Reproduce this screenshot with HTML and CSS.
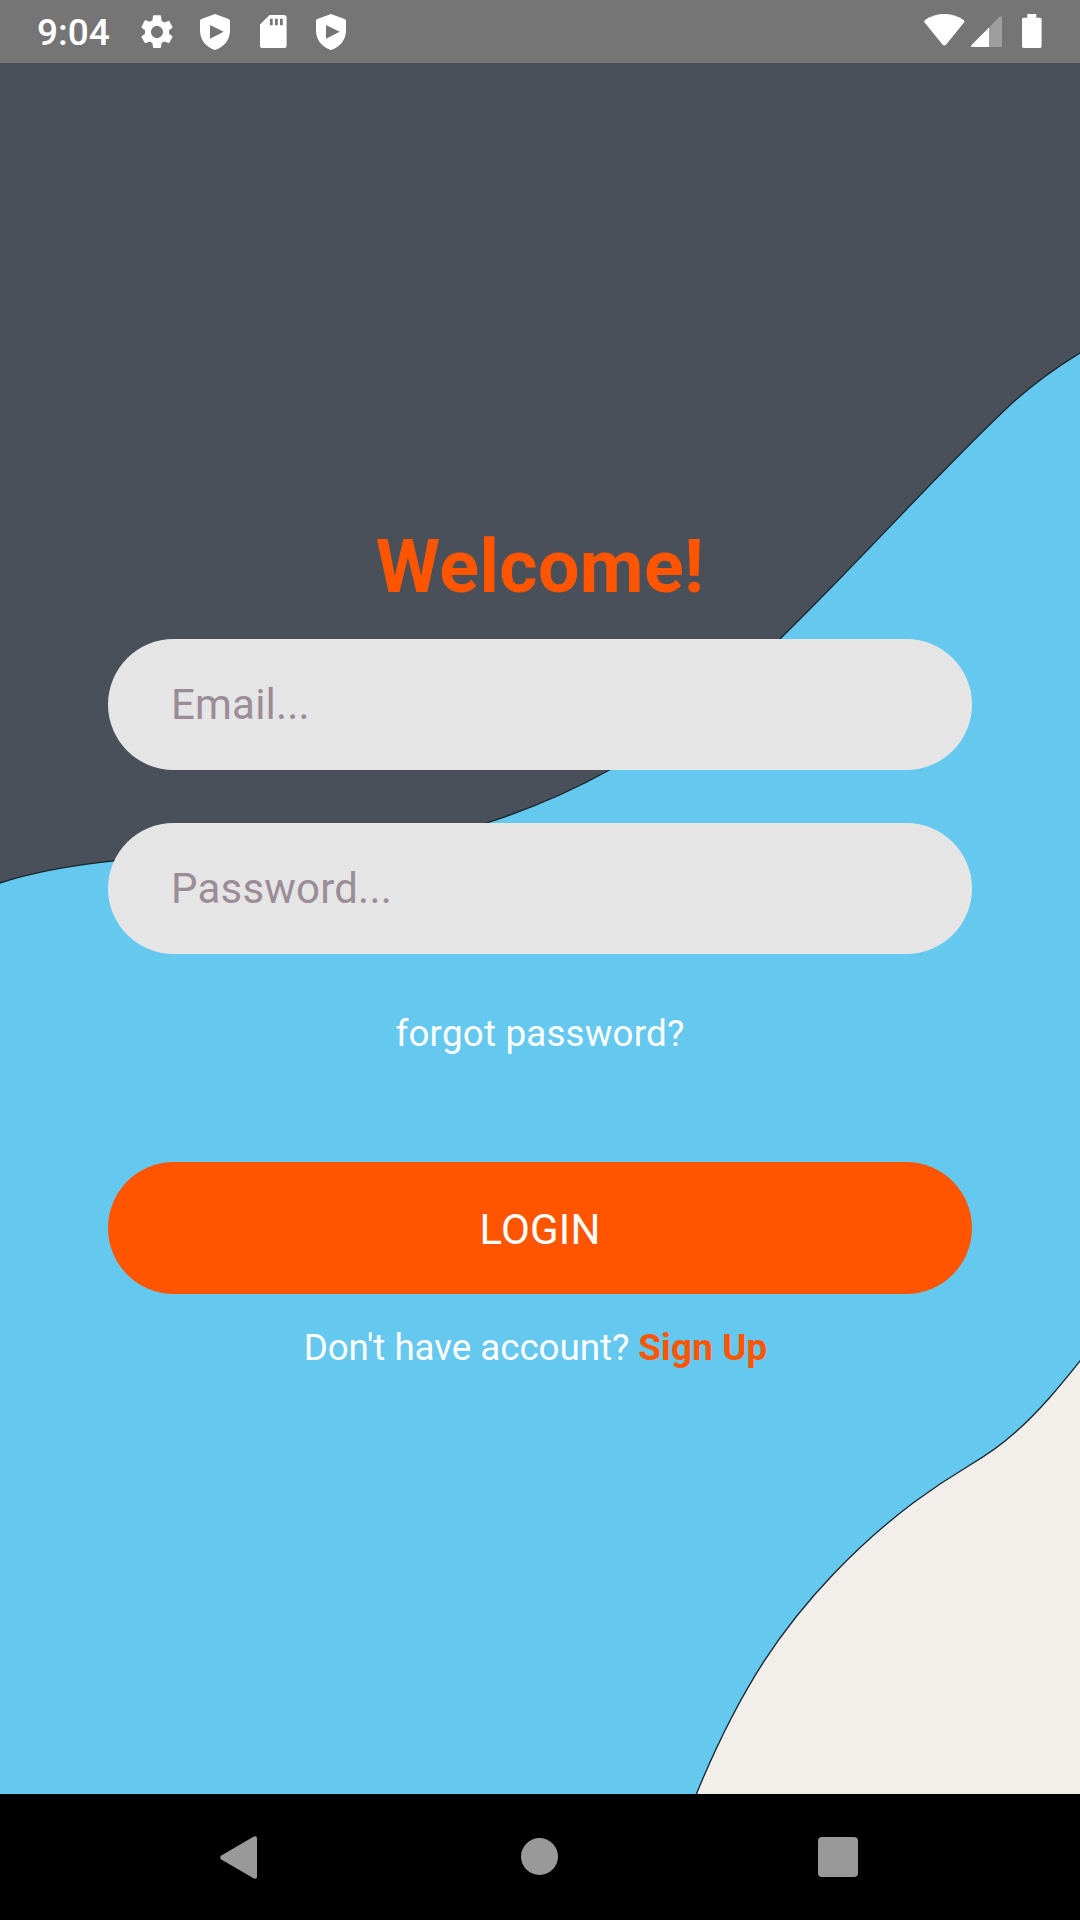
FILE: index.html
```html
<!DOCTYPE html>
<html lang="en">
<head>
<meta charset="utf-8">
<title>Login</title>
<link rel="stylesheet" href="styles.css">
</head>
<body>
<div class="screen">
  <header class="status-bar">
    <span class="clock">9:04</span>
    <svg class="gear" viewBox="0 0 24 24"><path d="M19.14 12.94c.04-.3.06-.61.06-.94 0-.32-.02-.64-.07-.94l2.03-1.58c.18-.14.23-.41.12-.61l-1.92-3.32c-.12-.22-.37-.29-.59-.22l-2.39.96c-.5-.38-1.03-.7-1.62-.94L14.4 2.4c-.04-.24-.24-.4-.48-.4h-3.84c-.24 0-.43.17-.47.41l-.36 2.54c-.59.24-1.13.57-1.62.94l-2.39-.96c-.22-.08-.47 0-.59.22L2.74 8.87c-.12.21-.08.47.12.61l2.03 1.58c-.05.3-.09.63-.09.94s.02.64.07.94l-2.03 1.58c-.18.14-.23.41-.12.61l1.92 3.32c.12.22.37.29.59.22l2.39-.96c.5.38 1.03.7 1.62.94l.36 2.54c.05.24.24.41.48.41h3.84c.24 0 .44-.17.47-.41l.36-2.54c.59-.24 1.13-.56 1.62-.94l2.39.96c.22.08.47 0 .59-.22l1.92-3.32c.12-.22.07-.47-.12-.61l-2.01-1.58zM12 15.6c-1.98 0-3.6-1.62-3.6-3.6s1.62-3.6 3.6-3.6 3.6 1.62 3.6 3.6-1.62 3.6-3.6 3.6z"/></svg>
    <svg class="shield" viewBox="0 0 30 36"><path fill-rule="evenodd" d="M15 0 28.6 5Q30 5.6 30 7V16.500C30 25.500 24 33.400 15 36 6 33.400 0 25.500 0 16.500V7Q0 5.600 1.400 5ZM10 11V24.700L23.700 17.800Z"/></svg>
    <svg class="sd-card" viewBox="0 0 27 33"><path fill-rule="evenodd" d="M9.500 0H24Q26.600 0 26.600 2.600V30.400Q26.600 33 24 33H2.600Q0 33 0 30.400V9.500ZM9.900 3.700V10.300H12.700V3.700ZM15 3.700V10.300H17.800V3.700ZM20 3.700V10.300H22.800V3.700Z"/></svg>
    <svg class="shield" viewBox="0 0 30 36"><path fill-rule="evenodd" d="M15 0 28.6 5Q30 5.6 30 7V16.500C30 25.500 24 33.400 15 36 6 33.400 0 25.500 0 16.500V7Q0 5.600 1.400 5ZM10 11V24.700L23.700 17.800Z"/></svg>
    <span class="spacer"></span>
    <svg class="wifi" viewBox="0 0 41 32"><path d="M.6 8.600Q-.3 7.200 1 6.100C7 1.800 13.500 0 20.300 0S33.600 1.800 39.600 6.100Q41 7.200 40 8.600L22 30.800Q20.300 32.400 18.700 30.800Z"/></svg>
    <svg class="signal" viewBox="0 0 31 31"><path class="faint" d="M18 11.500 28.600.8Q31-.8 31 1.800V29.500Q31 31 29.500 31H18Z"/><path d="M18 11.500V31H1.500Q-.7 31 .5 29Z"/></svg>
    <svg class="battery" viewBox="0 0 20 34"><path d="M5.300 0H14.300V3.700H18Q19.600 3.700 19.600 5.300V32.300Q19.600 34 18 34H1.600Q0 34 0 32.300V5.300Q0 3.700 1.600 3.700H5.300Z"/></svg>
  </header>

  <main class="login">
    <svg class="waves" viewBox="0 63 1080 1731">
      <path class="wave-blue" d="M-4 884.300C35 871 75 865 115.500 860.700C250 850 370 862 488 822.500C530 809 570 792 609.400 770C675 735 730 688 780.700 638.300C860 561 935 476 1006.700 408.300C1028 388 1053 369 1084 350.500V1800H-4Z"/>
      <path class="wave-cream" d="M1084 1356C1061 1385 1038 1413 1013.300 1434C1000 1446 985 1456 970 1465C950 1477 932 1489 913.300 1502.700C860 1543 805 1598 763.300 1662.300C736 1705 714 1750 694 1800H1084Z"/>
    </svg>
    <h1 class="title">Welcome!</h1>
    <input class="field" type="text" placeholder="Email..." aria-label="Email">
    <input class="field" type="text" placeholder="Password..." aria-label="Password">
    <a class="forgot">forgot password?</a>
    <button class="submit" type="button">LOGIN</button>
    <p class="signup">Don't have account? <a class="signup-link">Sign Up</a></p>
  </main>

  <nav class="nav-bar">
    <svg class="nav-back" viewBox="0 0 37 43"><path d="M1.300 19.500 33.500.7Q37-.8 37 2.500V40.500Q37 43.800 33.500 42.300L1.300 23.500Q-.8 21.500 1.300 19.500Z"/></svg>
    <span class="nav-home"></span>
    <span class="nav-recent"></span>
  </nav>
</div>
</body>
</html>
```
FILE: styles.css
```css
* {
  box-sizing: border-box;
}

body {
  margin: 0;
  font-family: Roboto, sans-serif;
}

.screen {
  display: flex;
  flex-direction: column;
  width: 1080px;
  height: 1920px;
  overflow: hidden;
}

svg {
  display: block;
  flex: none;
}

.status-bar {
  display: flex;
  align-items: flex-start;
  height: 63px;
  padding: 0 38px 0 37px;
  background: #757575;
  color: #fff;
  fill: #fff;
}

.clock {
  width: 100px;
  padding-top: 11px;
  font-size: 37px;
  font-weight: 500;
  line-height: 43px;
}

.gear {
  width: 40px;
  height: 40px;
  margin-top: 12px;
}

.shield {
  width: 30px;
  height: 36px;
  margin: 14px 30px 0 23px;
}

.sd-card {
  width: 27px;
  height: 33px;
  margin: 15px 6px 0 0;
}

.spacer {
  flex: 1;
}

.wifi {
  width: 41px;
  height: 32px;
  margin: 14px 6px 0 0;
}

.signal {
  width: 31px;
  height: 31px;
  margin: 16px 20px 0 0;
}

.faint {
  opacity: .3;
}

.battery {
  width: 20px;
  height: 34px;
  margin-top: 14px;
}

.login {
  position: relative;
  display: flex;
  flex-direction: column;
  align-items: center;
  height: 1731px;
  padding-top: 461px;
  background: #4a505a;
}

.waves {
  position: absolute;
  inset: 0;
  width: 1080px;
  height: 1731px;
}

.wave-blue,
.wave-cream {
  stroke: #17232b;
  stroke-width: 1.3;
}

.wave-blue {
  fill: #65c8ef;
}

.wave-cream {
  fill: #f2eeea;
}

.title,
.field,
.forgot,
.submit,
.signup {
  position: relative;
}

.title {
  height: 86px;
  margin: 0 0 29px;
  color: #f50;
  font-size: 73.5px;
  font-weight: 700;
  letter-spacing: .4px;
  line-height: 86px;
}

.field {
  width: 864px;
  height: 131px;
  margin: 0 0 53px;
  padding: 0 63px;
  border: 0;
  border-radius: 66px;
  background: #e5e5e5;
  font: 42px Roboto, sans-serif;
  letter-spacing: .2px;
}

.field::placeholder {
  color: #9b8c98;
  opacity: 1;
}

.forgot {
  margin: 5px 0 107px;
  color: #fff;
  font-size: 36.75px;
  letter-spacing: .2px;
  line-height: 43px;
}

.submit {
  width: 864px;
  height: 132px;
  padding: 2px 0 0;
  border: 0;
  border-radius: 66px;
  background: #f50;
  color: #fff;
  font: 42px Roboto, sans-serif;
  letter-spacing: .2px;
}

.signup {
  margin: 32px 9px 0 0;
  color: #fff;
  font-size: 36.75px;
  letter-spacing: -.05px;
  line-height: 43px;
}

.signup-link {
  color: #f50;
  font-weight: 700;
  letter-spacing: .15px;
}

.nav-bar {
  display: flex;
  align-items: center;
  justify-content: space-between;
  height: 126px;
  padding: 0 222px 0 220px;
  background: #000;
  fill: #999;
}

.nav-back {
  width: 37px;
  height: 43px;
}

.nav-home {
  width: 37px;
  height: 37px;
  margin: 0 0 1px 4px;
  border-radius: 50%;
  background: #999;
}

.nav-recent {
  width: 40px;
  height: 40px;
  border-radius: 4px;
  background: #999;
}
```
